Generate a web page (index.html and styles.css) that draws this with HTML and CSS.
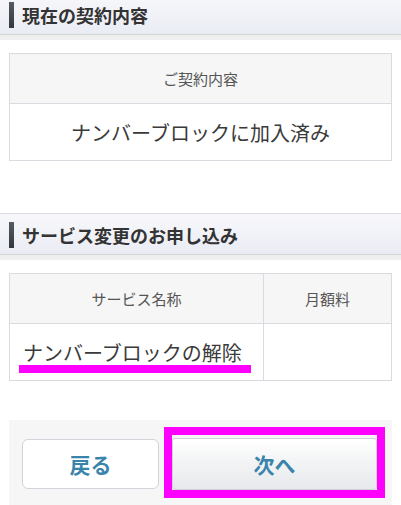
FILE: index.html
```html
<!DOCTYPE html>
<html lang="ja">
<head>
<meta charset="utf-8">
<link rel="stylesheet" href="styles.css">
</head>
<body>
<div class="sec-head first"><span class="bar"></span><h2 class="title">現在の契約内容</h2></div>
<table class="tbl tbl-one">
  <tr><th>ご契約内容</th></tr>
  <tr><td class="big center">ナンバーブロックに加入済み</td></tr>
</table>
<div class="sec-head second"><span class="bar"></span><h2 class="title">サービス変更のお申し込み</h2></div>
<table class="tbl tbl-two">
  <tr><th class="col-name">サービス名称</th><th>月額料</th></tr>
  <tr><td class="big left">ナンバーブロックの解除<span class="mark"></span></td><td></td></tr>
</table>
<div class="actions">
  <button class="btn back">戻る</button>
  <button class="btn next">次へ<span class="frame"></span></button>
</div>
</body>
</html>
```
FILE: styles.css
```css
html, body {
  margin: 0;
  padding: 0;
  background: #ffffff;
  font-family: "Noto Sans CJK JP", "Noto Sans", sans-serif;
  color: #333;
  overflow: hidden;
}
.sec-head {
  display: flex;
  align-items: center;
  height: 38px;
  padding-top: 2px;
  border-top: 1px solid #dcdde0;
  border-bottom: 1px solid #d3d4d8;
  box-shadow: 0 5px 0 #efeff0;
  background: linear-gradient(#f8f8fb, #eaecf4);
}
.sec-head.first { margin-top: -7px; }
.sec-head.second { margin-top: 52px; }
.bar {
  width: 5px;
  height: 26px;
  margin-left: 9px;
  background: linear-gradient(#555b63, #33383e);
}
.title {
  margin: 0 0 0 8px;
  font-size: 18px;
  font-weight: bold;
  color: #333;
  line-height: 1;
}
.tbl {
  margin: 18px 9px 0;
  width: 383px;
  border-collapse: collapse;
  table-layout: fixed;
}
.tbl th, .tbl td {
  border: 1px solid #dadbe1;
  padding: 0;
}
.tbl th {
  height: 49px;
  background: #f6f6f6;
  font-weight: normal;
  font-size: 15px;
  color: #555;
}
.tbl td {
  height: 56px;
  background: #fff;
}
.col-name { width: 253px; }
.big {
  font-size: 20px;
  color: #3a3a3a;
  position: relative;
}
.center { text-align: center; }
.left { text-align: left; padding-left: 13px !important; }
.mark {
  position: absolute;
  left: 9px;
  top: 41px;
  width: 232px;
  height: 8px;
  background: #ff00ff;
}
.actions {
  margin: 39px 9px 0;
  height: 67px;
  background: #f6f6f6;
  padding: 18px 15px 0 13px;
  display: grid;
  grid-template-columns: 137px 1fr;
  column-gap: 13px;
  align-items: start;
}
.btn {
  font-family: "Noto Sans CJK JP", sans-serif;
  font-size: 21px;
  font-weight: bold;
  color: #3a84ac;
  border-radius: 6px;
  padding: 0;
  cursor: pointer;
}
.back {
  height: 50px;
  margin-top: 1px;
  background: #fff;
  border: 1px solid #d2d4dc;
}
.next {
  position: relative;
  height: 52px;
  border: 1px solid #cfd2d8;
  border-radius: 3px;
  background: linear-gradient(#ffffff, #f3f4f5 45%, #e6e9ec);
}
.frame {
  position: absolute;
  left: -9px;
  right: -9px;
  top: -12px;
  bottom: -9px;
  border: 8px solid #ff00ff;
  pointer-events: none;
}
```
